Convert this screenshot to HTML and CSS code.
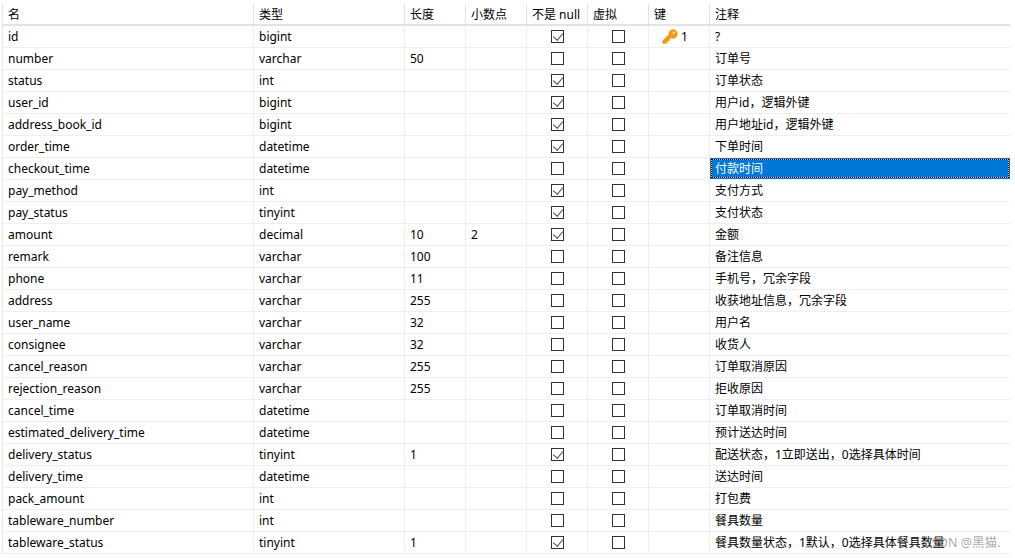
FILE: index.html
```html
<!DOCTYPE html>
<html lang="zh">
<head>
<meta charset="utf-8">
<title>表设计</title>
<link rel="stylesheet" href="styles.css">
</head>
<body>
<svg class="defs" width="0" height="0" aria-hidden="true">
  <symbol id="key" viewBox="0 0 16 15">
    <path fill="#f39c12" d="M11 0.300a4.700 4.700 0 0 1 0 9.400c-.8 0-1.500-.2-2.100-.5L7.500 10.600V12.300H5.500v1.300L4.200 14.800H1.200L0.300 14V11.700L6.600 5.600A4.700 4.700 0 0 1 11 .3z"/>
    <circle cx="11.800" cy="3.800" r="1.300" fill="#fde3a7"/>
  </symbol>
</svg>
<div class="grid">
  <div class="row head"><div>名</div><div>类型</div><div>长度</div><div>小数点</div><div>不是 null</div><div>虚拟</div><div>键</div><div>注释</div></div>
  <div class="row"><div>id</div><div>bigint</div><div></div><div></div><div class="c"><i class="cb on"></i></div><div class="c"><i class="cb"></i></div><div class="k"><svg class="key"><use href="#key"/></svg>1</div><div>?</div></div>
  <div class="row"><div>number</div><div>varchar</div><div>50</div><div></div><div class="c"><i class="cb"></i></div><div class="c"><i class="cb"></i></div><div></div><div>订单号</div></div>
  <div class="row"><div>status</div><div>int</div><div></div><div></div><div class="c"><i class="cb on"></i></div><div class="c"><i class="cb"></i></div><div></div><div>订单状态</div></div>
  <div class="row"><div>user_id</div><div>bigint</div><div></div><div></div><div class="c"><i class="cb on"></i></div><div class="c"><i class="cb"></i></div><div></div><div>用户id，逻辑外键</div></div>
  <div class="row"><div>address_book_id</div><div>bigint</div><div></div><div></div><div class="c"><i class="cb on"></i></div><div class="c"><i class="cb"></i></div><div></div><div>用户地址id，逻辑外键</div></div>
  <div class="row"><div>order_time</div><div>datetime</div><div></div><div></div><div class="c"><i class="cb on"></i></div><div class="c"><i class="cb"></i></div><div></div><div>下单时间</div></div>
  <div class="row"><div>checkout_time</div><div>datetime</div><div></div><div></div><div class="c"><i class="cb"></i></div><div class="c"><i class="cb"></i></div><div></div><div class="sel">付款时间</div></div>
  <div class="row"><div>pay_method</div><div>int</div><div></div><div></div><div class="c"><i class="cb on"></i></div><div class="c"><i class="cb"></i></div><div></div><div>支付方式</div></div>
  <div class="row"><div>pay_status</div><div>tinyint</div><div></div><div></div><div class="c"><i class="cb on"></i></div><div class="c"><i class="cb"></i></div><div></div><div>支付状态</div></div>
  <div class="row"><div>amount</div><div>decimal</div><div>10</div><div>2</div><div class="c"><i class="cb on"></i></div><div class="c"><i class="cb"></i></div><div></div><div>金额</div></div>
  <div class="row"><div>remark</div><div>varchar</div><div>100</div><div></div><div class="c"><i class="cb"></i></div><div class="c"><i class="cb"></i></div><div></div><div>备注信息</div></div>
  <div class="row"><div>phone</div><div>varchar</div><div>11</div><div></div><div class="c"><i class="cb"></i></div><div class="c"><i class="cb"></i></div><div></div><div>手机号，冗余字段</div></div>
  <div class="row"><div>address</div><div>varchar</div><div>255</div><div></div><div class="c"><i class="cb"></i></div><div class="c"><i class="cb"></i></div><div></div><div>收获地址信息，冗余字段</div></div>
  <div class="row"><div>user_name</div><div>varchar</div><div>32</div><div></div><div class="c"><i class="cb"></i></div><div class="c"><i class="cb"></i></div><div></div><div>用户名</div></div>
  <div class="row"><div>consignee</div><div>varchar</div><div>32</div><div></div><div class="c"><i class="cb"></i></div><div class="c"><i class="cb"></i></div><div></div><div>收货人</div></div>
  <div class="row"><div>cancel_reason</div><div>varchar</div><div>255</div><div></div><div class="c"><i class="cb"></i></div><div class="c"><i class="cb"></i></div><div></div><div>订单取消原因</div></div>
  <div class="row"><div>rejection_reason</div><div>varchar</div><div>255</div><div></div><div class="c"><i class="cb"></i></div><div class="c"><i class="cb"></i></div><div></div><div>拒收原因</div></div>
  <div class="row"><div>cancel_time</div><div>datetime</div><div></div><div></div><div class="c"><i class="cb"></i></div><div class="c"><i class="cb"></i></div><div></div><div>订单取消时间</div></div>
  <div class="row"><div>estimated_delivery_time</div><div>datetime</div><div></div><div></div><div class="c"><i class="cb"></i></div><div class="c"><i class="cb"></i></div><div></div><div>预计送达时间</div></div>
  <div class="row"><div>delivery_status</div><div>tinyint</div><div>1</div><div></div><div class="c"><i class="cb on"></i></div><div class="c"><i class="cb"></i></div><div></div><div>配送状态，1立即送出，0选择具体时间</div></div>
  <div class="row"><div>delivery_time</div><div>datetime</div><div></div><div></div><div class="c"><i class="cb"></i></div><div class="c"><i class="cb"></i></div><div></div><div>送达时间</div></div>
  <div class="row"><div>pack_amount</div><div>int</div><div></div><div></div><div class="c"><i class="cb"></i></div><div class="c"><i class="cb"></i></div><div></div><div>打包费</div></div>
  <div class="row"><div>tableware_number</div><div>int</div><div></div><div></div><div class="c"><i class="cb"></i></div><div class="c"><i class="cb"></i></div><div></div><div>餐具数量</div></div>
  <div class="row"><div>tableware_status</div><div>tinyint</div><div>1</div><div></div><div class="c"><i class="cb on"></i></div><div class="c"><i class="cb"></i></div><div></div><div>餐具数量状态，1默认，0选择具体餐具数量</div></div>
</div>
<div class="mark">CSDN @黑猫.</div>
</body>
</html>
```

FILE: styles.css
```css
* { box-sizing: border-box; }
html, body { height: 100%; }
body {
  margin: 0;
  padding: 4px 5px 0 2px;
  background: #fff;
  color: #000;
  font: 12px/21px "Noto Sans", "Noto Sans CJK SC", sans-serif;
  overflow: hidden;
  position: relative;
}
.defs { position: absolute; }
.grid { border-left: 1px solid #e6e6e6; width: 1008px; }
.row {
  display: grid;
  grid-template-columns: 251px 151px 61px 61px 61px 61px 61px 301px;
  height: 22px;
  border-bottom: 1px solid #efefef;
}
.row > div {
  border-right: 1px solid #efefef;
  padding-left: 5px;
  white-space: nowrap;
  overflow: hidden;
  min-width: 0;
}
.row > div:last-child { border-right: 0; }
.row.head { border-bottom: 2px solid #e3e3e3; }
.row.head > div { border-right-color: #e3e3e3; line-height: 20px; padding-top: 1px; }
.c { display: flex; align-items: center; justify-content: center; padding-left: 0 !important; }
.cb {
  display: block;
  width: 13px;
  height: 13px;
  border: 1px solid #333;
  position: relative;
}
.cb.on::after {
  content: "";
  position: absolute;
  left: 3px;
  top: 0;
  width: 5px;
  height: 8px;
  border: solid #555;
  border-width: 0 1.5px 1.5px 0;
  transform: rotate(40deg);
}
.k { display: flex; align-items: center; padding-left: 13px !important; }
.key { width: 16px; height: 15px; margin-right: 3px; }
.row > .sel {
  background: #0078d7;
  color: #fff;
  outline: 1px dotted #000;
  outline-offset: -2px;
  box-shadow: inset 0 0 0 1px #0078d7, inset 0 0 0 2px #ffb04a;
  margin-right: 1px;
}
.mark {
  position: absolute;
  left: 924px;
  top: 532px;
  color: rgba(120, 120, 120, 0.65);
  font-size: 12.5px;
  line-height: 21px;
  white-space: nowrap;
}
```
